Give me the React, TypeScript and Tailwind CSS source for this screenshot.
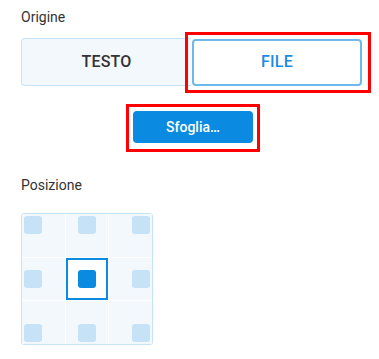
import { useState } from "react"

const positions = [
  "justify-start items-start",
  "justify-center items-start",
  "justify-end items-start",
  "justify-start items-center",
  "justify-center items-center",
  "justify-end items-center",
  "justify-start items-end",
  "justify-center items-end",
  "justify-end items-end",
]

export default function App() {
  const [source, setSource] = useState<"text" | "file">("file")
  const [pos, setPos] = useState(4)

  return (
    <div className="min-h-[359px] w-[379px] bg-white pl-[21px] pt-[7px] font-['Roboto',sans-serif] text-[#333]">
      <div className="text-[14px] leading-[20px]">Origine</div>

      <div className="mt-[11px] flex w-[341px] items-center">
        <button
          onClick={() => setSource("text")}
          className="flex h-[48px] w-[170px] items-center justify-center rounded-l-[4px] border border-r-0 border-[#c6e3f8] bg-[#f3f8fd] text-[16px] font-medium tracking-[0.2px] text-[#333]"
        >
          TESTO
        </button>
        <div className="relative ml-px">
          <button
            onClick={() => setSource("file")}
            className={`flex h-[47px] w-[170px] items-center justify-center rounded-[4px] border-2 border-[#6db9ec] bg-white text-[16px] font-medium tracking-[0.2px] ${
              source === "file" ? "text-[#1a8ce2]" : "text-[#333]"
            }`}
          >
            FILE
          </button>
          <div className="pointer-events-none absolute -bottom-[7px] -left-[7px] -right-[9px] -top-[7px] border-[3px] border-[#ff0000]" />
        </div>
      </div>

      <div className="mt-[25px] flex w-[341px] justify-center">
        <div className="relative ml-[3px]">
          <button className="h-[32px] w-[120px] rounded-[4px] bg-[#0a8ae0] text-[14px] font-medium text-white">
            Sfoglia…
          </button>
          <div className="pointer-events-none absolute -bottom-[9px] -left-[7px] -right-[7px] -top-[7px] border-[3px] border-[#ff0000]" />
        </div>
      </div>

      <div className="mt-[32px] text-[14px] leading-[20px]">Posizione</div>

      <div className="mt-[18px] grid w-[132px] grid-cols-[43px_42px_43px] grid-rows-[43px_42px_43px] gap-px rounded-[3px] border border-[#c6e3f8] bg-white">
        {positions.map((p, i) => (
          <button
            key={i}
            onClick={() => setPos(i)}
            className={`flex ${
              i === pos ? "justify-center items-center border-2 border-[#0a8ae0] bg-white" : `${p} bg-[#f3f8fd] p-[2px]`
            }`}
          >
            <span
              className={`block h-[18px] w-[18px] rounded-[3px] ${
                i === pos ? "bg-[#0a8ae0]" : "bg-[#c5e2f6]"
              }`}
            />
          </button>
        ))}
      </div>
    </div>
  )
}
